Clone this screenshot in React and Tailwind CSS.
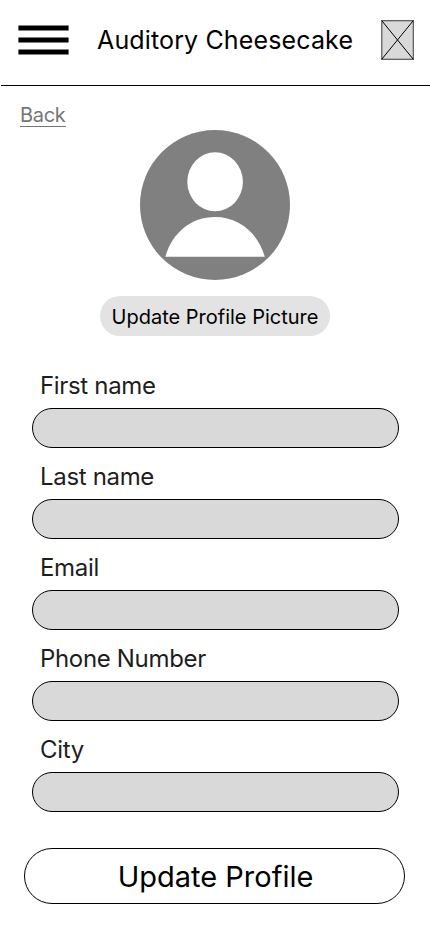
const fields = ["First name", "Last name", "Email", "Phone Number", "City"];

export default function App() {
  return (
    <div className="flex h-[932px] w-[430px] flex-col overflow-hidden bg-white font-['Inter',sans-serif] text-black">
      <header className="ml-px flex h-[86px] shrink-0 items-start border-b border-black pl-[17px]">
        <button aria-label="Menu" className="mt-[25px]">
          <svg width="51" height="30" viewBox="0 0 51 30" stroke="black" strokeWidth="5">
            <path d="M0.4 3H50.6M0.4 15H50.6M0.4 27H50.6" />
          </svg>
        </button>
        <h1 className="mt-[25px] ml-[28px] w-[284px] text-[25px] leading-[30px] tracking-[0.14px] whitespace-nowrap">Auditory Cheesecake</h1>
        <svg className="mt-[20px] shrink-0" width="33" height="40" viewBox="0 0 33 40" fill="none" stroke="black">
          <rect x="0.8" y="0.7" width="31.5" height="38.6" fill="#d9d9d9" stroke="#555" strokeWidth="1.2" />
          <path d="M0.7 0.6L32.3 39.3M32.3 0.6L0.7 39.3" />
        </svg>
      </header>
      <main className="flex flex-col">
        <div className="mt-[17px] ml-[20px] h-[27px]">
          <a className="inline-block h-[24px] w-[46px] border-b border-[#757575] text-[20px] leading-[24px] tracking-[-0.3px] text-[#757575]">Back</a>
        </div>
        <svg className="self-center" width="150" height="150" viewBox="0 0 150 150">
          <circle cx="75" cy="75" r="75" fill="#808080" />
          <ellipse cx="75.1" cy="51.8" rx="27.8" ry="29.5" fill="white" />
          <path d="M25.3 126.8C32 103 51 87 75 87S118 103 124.8 126.8Z" fill="white" />
        </svg>
        <button className="mt-[16px] h-[40px] w-[230px] self-center rounded-full bg-[#e3e3e3] pt-[2px] text-[20px] leading-[24px] whitespace-nowrap">Update Profile Picture</button>
        <form className="mt-[34px] flex flex-col gap-[13px] pl-[32px]">
          {fields.map((label) => (
            <label key={label} className="flex h-[78px] flex-col">
              <span className="ml-[8px] h-[38px] pt-px text-[24px] leading-[30px] tracking-[-0.33px] text-[#1e1e1e]">{label}</span>
              <input className="h-[40px] w-[367px] shrink-0 rounded-full border border-black bg-[#d9d9d9] px-4" />
            </label>
          ))}
        </form>
        <button className="mt-[36px] ml-[24px] h-[56px] w-[381px] rounded-full border border-black pt-px pl-[2px] text-[29px] leading-[36px]">Update Profile</button>
      </main>
    </div>
  );
}
